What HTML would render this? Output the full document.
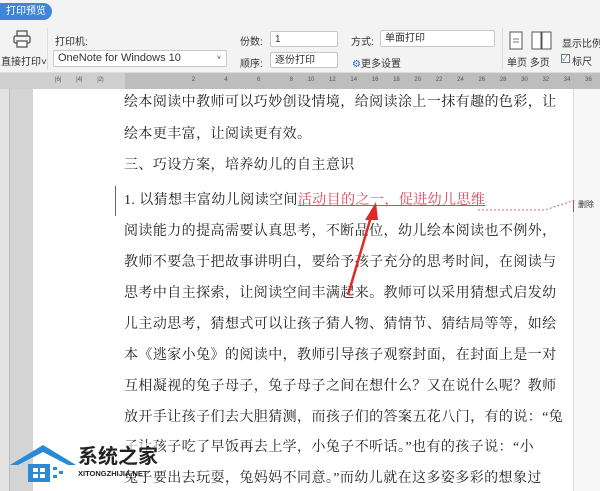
<!DOCTYPE html>
<html><head><meta charset="utf-8"><style>
*{margin:0;padding:0;box-sizing:border-box}
body{width:600px;height:491px;overflow:hidden;background:#d4d4d4;font-family:"Liberation Sans","Noto Sans CJK SC",sans-serif;position:relative}
.abs{position:absolute}
.tb{left:0;top:0;width:600px;height:73px;background:#f3f3f3;border-bottom:1px solid #ddd}
.tab{left:0;top:3px;width:52px;height:17px;background:#3f86d9;border-radius:0 9px 9px 0;color:#fff;font-size:10px;line-height:17px;padding-left:6px}
.lbl{font-size:10px;color:#333;white-space:nowrap}
.sel{background:#fff;border:1px solid #c8c8c8;border-radius:2px;font-size:10px;color:#333;padding-left:4px;line-height:15px}
.ruler{left:0;top:73px;width:600px;height:16px;background:#cfcfcf;font-size:6px;color:#555;overflow:hidden}
.page{left:33px;top:89px;width:540px;height:402px;background:#fff}
.side{left:573px;top:89px;width:27px;height:402px;background:#f7f7f7;border-left:1px solid #ddd}
.vr{left:0;top:89px;width:10px;height:402px;background:#e3e3e3;border-right:1px solid #bbb}
.t{left:124px;font-family:"Liberation Serif","Noto Serif CJK SC",serif;font-size:14px;letter-spacing:0.42px;color:#222;white-space:nowrap;line-height:20px}
</style></head><body>
<div class="abs tb"></div>
<div class="abs tab">打印预览</div>
<svg class="abs" style="left:12px;top:30px" width="20" height="18" viewBox="0 0 20 18"><rect x="5" y="1" width="10" height="5" fill="none" stroke="#555" stroke-width="1.3"/><rect x="2" y="6" width="16" height="7" rx="1.5" fill="none" stroke="#555" stroke-width="1.3"/><rect x="5" y="11" width="10" height="6" fill="#fff" stroke="#555" stroke-width="1.3"/></svg>
<div class="abs lbl" style="left:1px;top:53px">直接打印˅</div>
<div class="abs" style="left:47px;top:28px;width:1px;height:42px;background:#ddd"></div>
<div class="abs lbl" style="left:55px;top:33px">打印机:</div>
<div class="abs sel" style="left:53px;top:50px;width:174px;height:17px;font-size:11px">OneNote for Windows 10<span style="float:right;margin-right:5px;font-size:7px">˅</span></div>
<div class="abs lbl" style="left:240px;top:33px">份数:</div>
<div class="abs sel" style="left:270px;top:31px;width:68px;height:16px">1</div>
<div class="abs lbl" style="left:240px;top:55px">顺序:</div>
<div class="abs sel" style="left:270px;top:52px;width:68px;height:16px">逐份打印</div>
<div class="abs lbl" style="left:351px;top:33px">方式:</div>
<div class="abs sel" style="left:380px;top:30px;width:115px;height:17px">单面打印</div>
<div class="abs lbl" style="left:352px;top:55px"><span style="color:#2a6fc9">⚙</span>更多设置</div>
<div class="abs" style="left:502px;top:28px;width:1px;height:42px;background:#ddd"></div>
<svg class="abs" style="left:508px;top:31px" width="48" height="20"><rect x="2" y="1" width="12" height="17" fill="#fff" stroke="#555"/><line x1="5" y1="8" x2="11" y2="8" stroke="#777"/><line x1="5" y1="11" x2="11" y2="11" stroke="#777"/><rect x="24" y="1" width="9" height="17" fill="#fff" stroke="#555"/><rect x="34" y="1" width="9" height="17" fill="#fff" stroke="#555"/></svg>
<div class="abs lbl" style="left:507px;top:54px">单页 多页</div>
<div class="abs lbl" style="left:562px;top:35px;width:38px;overflow:hidden">显示比例</div>
<div class="abs" style="left:561px;top:54px;width:9px;height:9px;border:1px solid #777;background:#fff;font-size:8px;line-height:8px;color:#2a6fc9">✓</div>
<div class="abs lbl" style="left:572px;top:53px">标尺</div>
<div class="abs ruler"><div class="abs" style="left:125px;top:0;width:475px;height:16px;background:#bdbdbd"></div>
<div class="abs" style="left:55px;top:4px;word-spacing:13px;white-space:nowrap">|6| |4| |2| &nbsp; &nbsp;&nbsp; 2 &nbsp;4 &nbsp;6 &nbsp;8 10 12 14 16 18 20 22 24 26 28 30 32 34 36 38 40 42 44</div></div>
<div class="abs vr"></div>
<div class="abs page"></div>
<div class="abs side"></div>
<div class="abs" style="left:573px;top:200px;width:1px;height:12px;background:#a55"></div>
<div class="abs" style="left:578px;top:199px;font-size:8px;color:#333">删除</div>
<div class="abs" style="left:115px;top:186px;width:1px;height:30px;background:#666"></div>
<div class="abs t" style="top:93px">绘本阅读中教师可以巧妙创设情境，给阅读涂上一抹有趣的色彩，让</div>
<div class="abs t" style="top:125px">绘本更丰富，让阅读更有效。</div>
<div class="abs t" style="top:156px">三、巧设方案，培养幼儿的自主意识</div>
<div class="abs t" style="top:191px">1. 以猜想丰富幼儿阅读空间<span style="color:#e0455a;text-decoration:underline">活动目的之一，促进幼儿思维</span></div>
<svg class="abs" style="left:470px;top:190px" width="110" height="25"><path d="M8 20 L75 20 L105 10" fill="none" stroke="#e06070" stroke-width="1" stroke-dasharray="2,2"/></svg>
<div class="abs t" style="top:222px">阅读能力的提高需要认真思考，不断品位，幼儿绘本阅读也不例外，</div>
<div class="abs t" style="top:253px">教师不要急于把故事讲明白，要给予孩子充分的思考时间，在阅读与</div>
<div class="abs t" style="top:284px">思考中自主探索，让阅读空间丰满起来。教师可以采用猜想式启发幼</div>
<div class="abs t" style="top:315px">儿主动思考，猜想式可以让孩子猜人物、猜情节、猜结局等等，如绘</div>
<div class="abs t" style="top:346px">本《逃家小兔》的阅读中，教师引导孩子观察封面，在封面上是一对</div>
<div class="abs t" style="top:377px">互相凝视的兔子母子，兔子母子之间在想什么？又在说什么呢？教师</div>
<div class="abs t" style="top:408px">放开手让孩子们去大胆猜测，而孩子们的答案五花八门，有的说：“兔</div>
<div class="abs t" style="top:438px">子让孩子吃了早饭再去上学，小兔子不听话。”也有的孩子说：“小</div>
<div class="abs t" style="top:469px">兔子要出去玩耍，兔妈妈不同意。”而幼儿就在这多姿多彩的想象过</div>
<svg class="abs" style="left:340px;top:200px" width="40" height="100"><line x1="8" y1="95" x2="33" y2="10" stroke="#e02828" stroke-width="2.5"/><path d="M36 2 L25 20 L38 20 Z" fill="#e02828"/></svg>
<svg class="abs" style="left:8px;top:440px" width="70" height="45"><path d="M2 25 L35 5 L68 25 L60 25 L35 12 L10 25Z" fill="#2a8ad8"/><rect x="20" y="24" width="22" height="18" fill="#2a8ad8"/><rect x="25" y="28" width="5" height="4" fill="#fff"/><rect x="32" y="28" width="5" height="4" fill="#fff"/><rect x="25" y="34" width="5" height="4" fill="#fff"/><rect x="32" y="34" width="5" height="4" fill="#fff"/><rect x="45" y="27" width="4" height="3" fill="#2a8ad8"/><rect x="51" y="31" width="4" height="3" fill="#2a8ad8"/><rect x="45" y="35" width="4" height="3" fill="#2a8ad8"/></svg>
<div class="abs" style="left:78px;top:443px;font-size:20px;font-weight:bold;color:#222;background:rgba(255,255,255,0.6);font-family:'Noto Sans CJK SC',sans-serif;line-height:24px">系统之家</div>
<div class="abs" style="left:78px;top:469px;font-size:7.5px;font-weight:bold;color:#222">XITONGZHIJIA.NET</div>
</body></html>
